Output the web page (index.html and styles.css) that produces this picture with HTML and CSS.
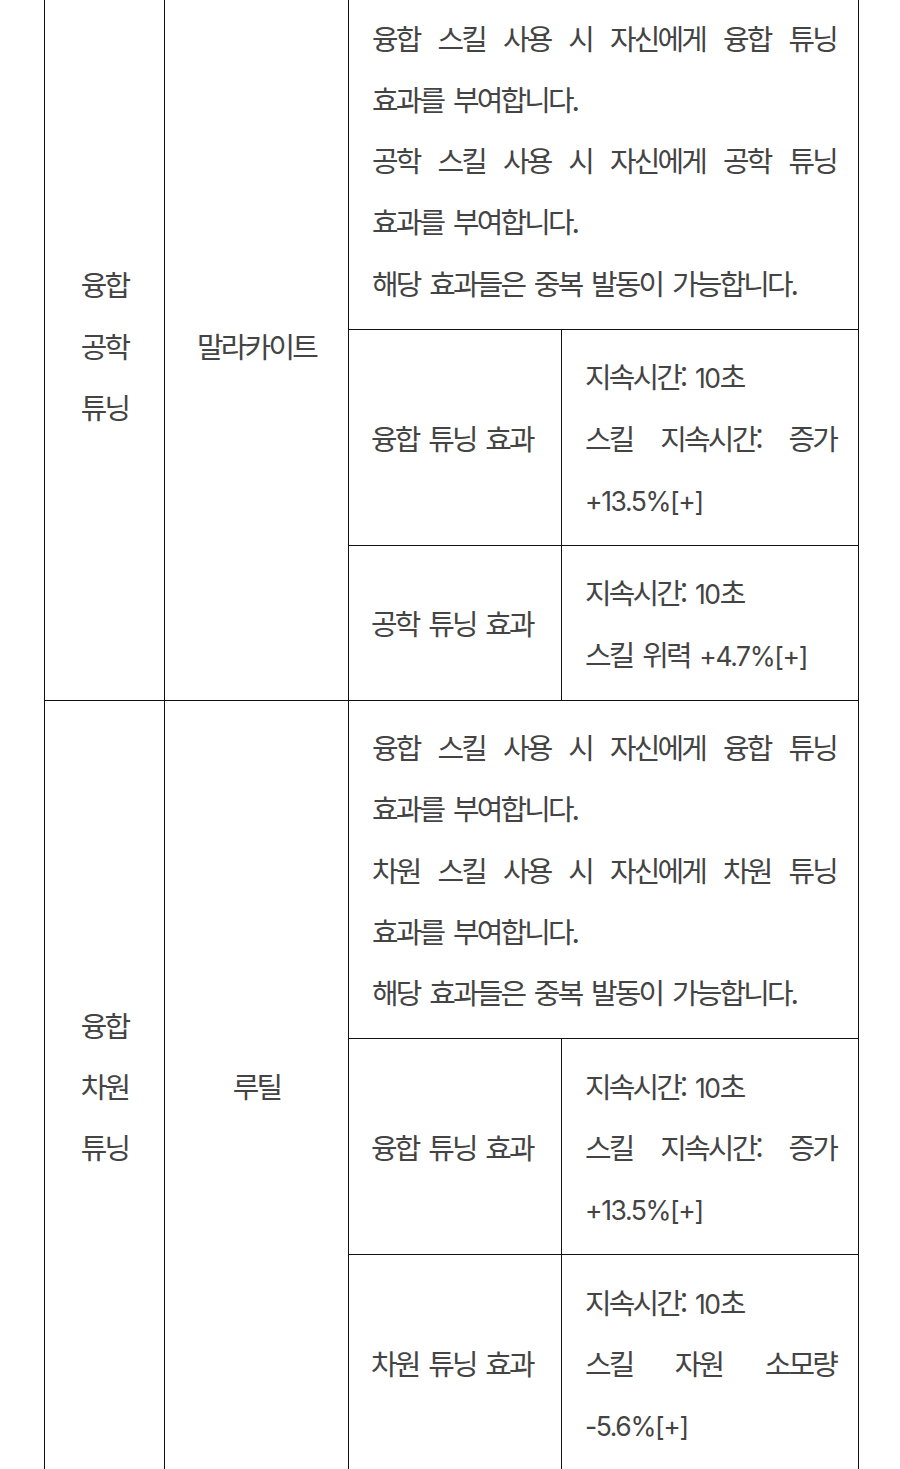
FILE: index.html
```html
<!DOCTYPE html>
<html lang="ko">
<head>
<meta charset="utf-8">
<title>튜닝 효과</title>
<link rel="stylesheet" href="styles.css">
</head>
<body>
<table class="tuning">
  <colgroup>
    <col class="c-name">
    <col class="c-item">
    <col class="c-effect">
    <col class="c-detail">
  </colgroup>
  <tbody>
    <tr>
      <td class="center" rowspan="3">융합 공학 튜닝</td>
      <td class="center" rowspan="3">말라카이트</td>
      <td class="desc" colspan="2">융합 스킬 사용 시 자신에게 융합 튜닝 효과를 부여합니다.<br>공학 스킬 사용 시 자신에게 공학 튜닝 효과를 부여합니다.<br>해당 효과들은 중복 발동이 가능합니다.</td>
    </tr>
    <tr>
      <td class="label">융합 튜닝 효과</td>
      <td class="desc">지속시간: <span class="num">10</span>초<br>스킬 지속시간: 증가 <span class="num">+13.5%[+]</span></td>
    </tr>
    <tr>
      <td class="label">공학 튜닝 효과</td>
      <td class="desc">지속시간: <span class="num">10</span>초<br>스킬 위력 <span class="num">+4.7%[+]</span></td>
    </tr>
    <tr>
      <td class="center" rowspan="3">융합 차원 튜닝</td>
      <td class="center" rowspan="3">루틸</td>
      <td class="desc" colspan="2">융합 스킬 사용 시 자신에게 융합 튜닝 효과를 부여합니다.<br>차원 스킬 사용 시 자신에게 차원 튜닝 효과를 부여합니다.<br>해당 효과들은 중복 발동이 가능합니다.</td>
    </tr>
    <tr>
      <td class="label">융합 튜닝 효과</td>
      <td class="desc">지속시간: <span class="num">10</span>초<br>스킬 지속시간: 증가 <span class="num">+13.5%[+]</span></td>
    </tr>
    <tr>
      <td class="label">차원 튜닝 효과</td>
      <td class="desc">지속시간: <span class="num">10</span>초<br>스킬 자원 소모량 <span class="num">-5.6%[+]</span></td>
    </tr>
  </tbody>
</table>
</body>
</html>
```
FILE: styles.css
```css
html, body {
  margin: 0;
  padding: 0;
  background: #ffffff;
}

body {
  font-family: "Noto Sans CJK KR", "Noto Sans", sans-serif;
  color: #444444;
}

.tuning {
  border-collapse: collapse;
  table-layout: fixed;
  width: 814px;
  margin: -10px 0 0 44px;
  font-size: 28.9px;
  letter-spacing: -2.8px;
  word-spacing: 4.3px;
  line-height: 61.3px;
  word-break: keep-all;
}

.c-name { width: 120px; }
.c-item { width: 184px; }
.c-effect { width: 213px; }
.c-detail { width: 297px; }

.tuning td {
  border: 1px solid #111111;
  padding: 15.6px 22px 15.6px 23px;
  vertical-align: middle;
}

.tuning td.center {
  text-align: center;
  padding-left: 20px;
  padding-right: 20px;
}

.tuning td.label {
  text-align: left;
  padding-left: 22px;
}

.tuning td.desc {
  text-align: justify;
}

.num {
  font-family: "Inter", "Noto Sans", sans-serif;
  font-size: 26.5px;
  letter-spacing: -1.4px;
  word-spacing: 0;
  line-height: 1;
  white-space: nowrap;
}
```
